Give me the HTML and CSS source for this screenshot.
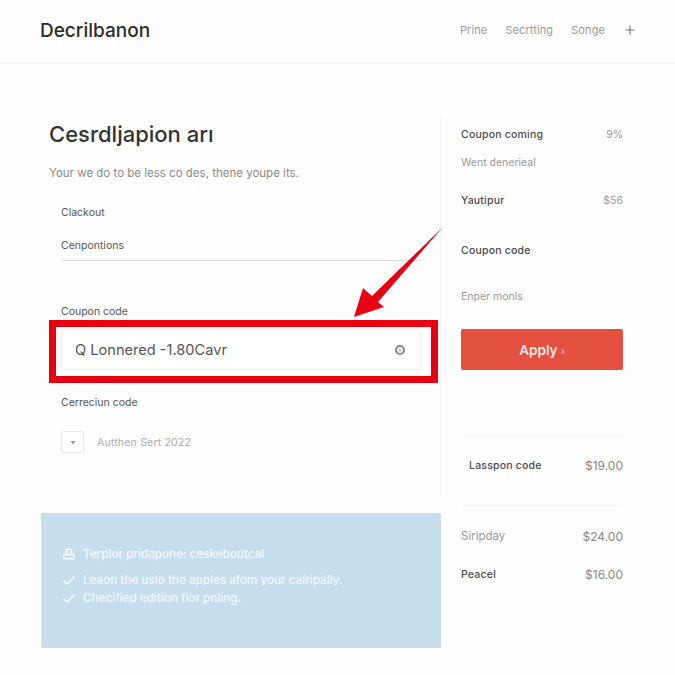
FILE: index.html
```html
<!DOCTYPE html>
<html lang="en">
<head>
<meta charset="utf-8">
<title>Decrilbanon</title>
<link rel="stylesheet" href="styles.css">
</head>
<body>
<header class="topbar">
  <div class="brand">Decrilbanon</div>
  <nav class="nav">
    <span>Prine</span>
    <span>Secrtting</span>
    <span>Songe</span>
    <svg class="plus" width="10" height="10" viewBox="0 0 10 10" aria-hidden="true"><path d="M5 .5v9M.5 5h9"/></svg>
  </nav>
</header>
<main class="main">
  <div class="left">
    <section class="form">
      <h1>Cesrdljapion arı</h1>
      <p class="lead">Your we do to be less co des, thene youpe its.</p>
      <div class="fields">
        <div class="label first">Clackout</div>
        <div class="label rule">Cenpontions</div>
        <div class="label coupon">Coupon code</div>
        <div class="highlight">
          <div class="input">
            <span>Q Lonnered -1.80Cavr</span>
            <svg width="12" height="12" viewBox="0 0 12 12" aria-hidden="true"><circle cx="6" cy="6" r="4" class="ring"/><circle cx="6" cy="6" r="1.5" class="dot"/></svg>
          </div>
        </div>
        <div class="label corr">Cerreciun code</div>
        <div class="select">
          <span class="box"><svg width="6" height="5" viewBox="0 0 6 5" aria-hidden="true"><path d="M.5 1h5L3 4.5z"/></svg></span>
          <span class="muted">Autthen Sert 2022</span>
        </div>
      </div>
    </section>
    <section class="note">
      <div class="note-row head">
        <svg width="14" height="14" viewBox="0 0 14 14" aria-hidden="true"><path d="M4.5 6.5V4.2a2.5 2.5 0 0 1 5 0v2.3M2.5 7.5h9a.6.6 0 0 1 .6.6v3.7H1.9V8.1a.6.6 0 0 1 .6-.6z"/></svg>
        <span>Terplor pridapone: ceskeboutcal</span>
      </div>
      <div class="note-row">
        <svg width="14" height="14" viewBox="0 0 14 14" aria-hidden="true"><path d="M1.5 7.5l3.5 3.5 7.5-7.5"/></svg>
        <span>Leaon the uslo the apples afom your calripally.</span>
      </div>
      <div class="note-row">
        <svg width="14" height="14" viewBox="0 0 14 14" aria-hidden="true"><path d="M1.5 7.5l3.5 3.5 7.5-7.5"/></svg>
        <span>Checified edition fior pnling.</span>
      </div>
    </section>
  </div>
  <aside class="side">
    <div class="row r1"><b>Coupon coming</b><span>9%</span></div>
    <div class="row r2"><span>Went denerieal</span></div>
    <div class="row r3"><b>Yautipur</b><span>$56</span></div>
    <div class="row r4"><b>Coupon code</b></div>
    <div class="row r5"><span>Enper monls</span></div>
    <button class="apply" type="button">Apply <small>›</small></button>
    <div class="row total"><b>Lasspon code</b><span class="amount">$19.00</span></div>
    <div class="row r6"><span class="wide">Siripday</span><span class="amount">$24.00</span></div>
    <div class="row r7"><b>Peacel</b><span class="amount">$16.00</span></div>
  </aside>
</main>
<svg class="arrow" width="675" height="675" viewBox="0 0 675 675" aria-hidden="true"><polygon points="354,317 363,288 372,296 443,227 378,302 384,307"/></svg>
</body>
</html>
```
FILE: styles.css
```css
* { box-sizing: border-box; }
html, body { margin: 0; padding: 0; }
body {
  width: 675px;
  height: 675px;
  overflow: hidden;
  background: #fefefe;
  font-family: "Inter", "Liberation Sans", sans-serif;
  color: #333;
  position: relative;
}
.topbar {
  height: 64px;
  padding: 0 40px 3px;
  border-bottom: 1px solid #f3f3f3;
  display: flex;
  align-items: center;
  justify-content: space-between;
}
.brand { font-size: 19px; font-weight: 500; color: #2a2a2a; letter-spacing: 0; }
.nav { display: flex; align-items: center; gap: 18px; font-size: 11px; color: #999; letter-spacing: 0.1px; }
.plus { margin-left: 2px; }
.plus path { stroke: #777; stroke-width: 1.2; fill: none; }
.main {
  padding: 51px 52px 0 41px;
  display: grid;
  grid-template-columns: 400px 162px;
  column-gap: 20px;
}
.left { display: flex; flex-direction: column; gap: 16px; }
.form {
  height: 382px;
  padding: 6px 0 0 8px;
  border-right: 1px solid #f3f3f3;
}
h1 { margin: 0; font-size: 22px; line-height: 26px; font-weight: 500; color: #333; }
.lead { margin: 18px 0 0; font-size: 11.5px; line-height: 16px; color: #8a8a8a; }
.fields { margin-top: 25px; padding-left: 12px; }
.label { font-size: 10.5px; line-height: 14px; color: #555; }
.rule { margin: 19px 0 0 0; padding-bottom: 7px; width: 360px; border-bottom: 1px solid #ddd; }
.coupon { margin-top: 44px; }
.highlight {
  width: 389px;
  height: 63px;
  margin: 1px 0 0 -12px;
  padding: 2px 10px 0 5px;
  border: 7px solid #e60012;
}
.input {
  height: 41px;
  padding: 0 14px 0 13px;
  background: #fff;
  border: 1px solid #eee;
  border-radius: 2px;
  display: flex;
  align-items: center;
  justify-content: space-between;
  font-size: 14.6px;
  color: #555;
}
.ring { fill: none; stroke: #888; stroke-width: 2.2; }
.dot { fill: #bbb; }
.corr { margin-top: 13px; }
.select { margin-top: 21px; display: flex; align-items: center; gap: 13px; }
.box {
  width: 23px;
  height: 22px;
  background: #fff;
  border: 1px solid #e8e8e8;
  border-radius: 2px;
  display: flex;
  align-items: center;
  justify-content: center;
}
.box path { fill: #999; }
.muted { font-size: 10.5px; color: #aaa; letter-spacing: 0.2px; }
.note {
  height: 135px;
  padding: 32px 0 0 21px;
  background: #c5dded;
  border-radius: 2px;
  color: #f5fafc;
  font-size: 11.7px;
  font-weight: 500;
}
.note-row { display: flex; align-items: center; gap: 7px; height: 18px; }
.note-row svg path { fill: none; stroke: #fafdfe; stroke-width: 1.5; }
.note-row.head { margin-bottom: 8px; }
.side { font-size: 10.5px; color: #999; }
.row { display: flex; justify-content: space-between; align-items: center; height: 14px; }
.row b { font-weight: 500; color: #4a4a4a; letter-spacing: 0.2px; }
.r1 { margin-top: 12px; }
.r2 { margin-top: 14px; }
.r3 { margin-top: 24px; }
.r4 { margin-top: 36px; }
.r5 { margin-top: 32px; }
.apply {
  display: block;
  width: 162px;
  height: 41px;
  margin-top: 26px;
  background: #e4503f;
  border: 0;
  border-radius: 2px;
  color: #fbeae6;
  font: 600 13.5px "Inter", "Liberation Sans", sans-serif;
}
.apply small { font-size: 10px; font-weight: 400; }
.total {
  height: 71px;
  margin-top: 65px;
  padding: 0 0 10px 8px;
  border-top: 1px solid #f3f3f3;
  border-bottom: 1px solid #f3f3f3;
}
.amount { font-size: 12px; color: #888; }
.wide { font-size: 11.5px; }
.r6 { margin-top: 23px; }
.r7 { margin-top: 24px; }
.arrow { position: absolute; left: 0; top: 0; pointer-events: none; }
.arrow polygon { fill: #e60012; }
```
